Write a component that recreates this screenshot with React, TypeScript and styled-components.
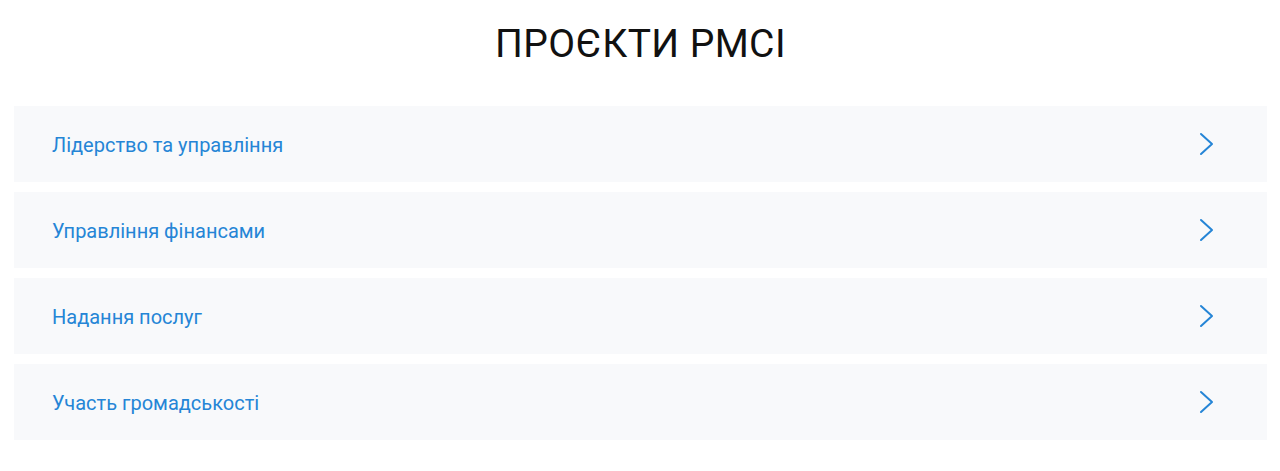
import React from "react";
import styled, { createGlobalStyle } from "styled-components";

const Global = createGlobalStyle`
  html, body { margin: 0; padding: 0; background: #ffffff; }
  body { font-family: Roboto, sans-serif; }
`;

const Page = styled.section`
  padding: 16px 13px 0 14px;
`;

const Title = styled.h2`
  margin: 0 0 34px;
  text-align: center;
  font-family: Roboto, sans-serif;
  font-weight: 400;
  font-size: 39px;
  line-height: 56px;
  color: #111111;
  letter-spacing: 0.4px;
`;

const List = styled.div`
  display: flex;
  flex-direction: column;
  gap: 10px;
`;

const Row = styled.a`
  display: flex;
  align-items: center;
  justify-content: space-between;
  height: 76px;
  padding: 0 53px 0 38px;
  background: #f8f9fb;
  text-decoration: none;
  cursor: pointer;
`;

const Label = styled.span`
  font-family: Roboto, sans-serif;
  font-size: 20px;
  line-height: 24px;
  padding-top: 1px;
  color: #2585d6;
`;

const Chevron = () => (
  <svg width="16" height="24" viewBox="0 0 16 24" fill="none">
    <path d="M3 2 L14 12 L3 22" stroke="#2585d6" strokeWidth="2" strokeLinecap="round" strokeLinejoin="round" />
  </svg>
);

const items = [
  "Лідерство та управління",
  "Управління фінансами",
  "Надання послуг",
  "Участь громадськості",
];

export default function App() {
  return (
    <>
      <Global />
      <Page>
        <Title>ПРОЄКТИ РМСІ</Title>
        <List>
          {items.map((t) => (
            <Row key={t}>
              <Label>{t}</Label>
              <Chevron />
            </Row>
          ))}
        </List>
      </Page>
    </>
  );
}
